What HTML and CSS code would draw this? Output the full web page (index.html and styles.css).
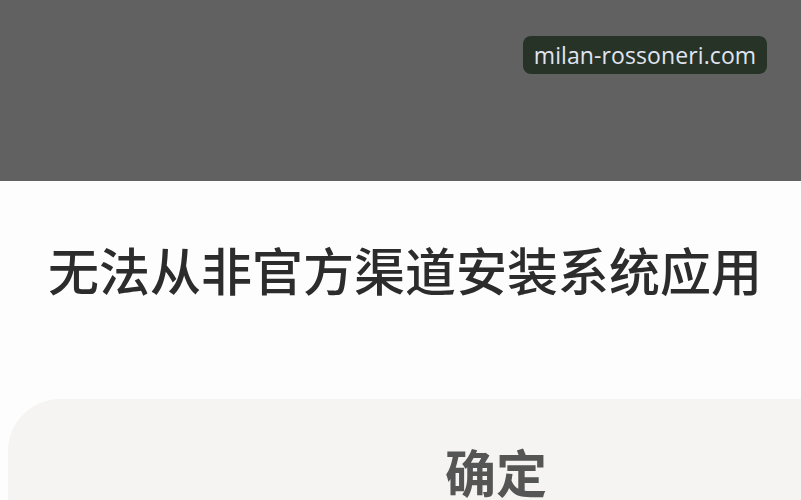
FILE: index.html
```html
<!DOCTYPE html>
<html lang="zh-CN">
<head>
<meta charset="utf-8">
<link rel="stylesheet" href="styles.css">
</head>
<body>
<div class="screen">
  <div class="shade">
    <div class="watermark">milan-rossoneri.com</div>
  </div>
  <div class="dialog">
    <div class="title">无法从非官方渠道安装系统应用</div>
    <div class="button"><span class="label">确定</span></div>
  </div>
</div>
</body>
</html>
```
FILE: styles.css
```css
html, body {
  margin: 0;
  padding: 0;
}
body {
  width: 801px;
  height: 500px;
  overflow: hidden;
  background: #fdfdfd;
  font-family: "Noto Sans CJK SC", "Noto Sans", sans-serif;
}
.screen {
  display: flex;
  flex-direction: column;
  height: 500px;
  overflow: hidden;
}
.shade {
  position: relative;
  height: 181px;
  background: #616161;
  flex: none;
}
.watermark {
  position: absolute;
  left: 523px;
  top: 36px;
  width: 244px;
  height: 38px;
  box-sizing: border-box;
  border-radius: 8px;
  background: #263326;
  color: #e0e4f0;
  font-family: "Open Sans", "Noto Sans", sans-serif;
  font-size: 23px;
  line-height: 38px;
  text-align: center;
  letter-spacing: 0.1px;
}
.dialog {
  flex: 1;
  min-height: 0;
  background: #fdfdfd;
  display: flex;
  flex-direction: column;
}
.title {
  flex: none;
  padding-top: 63px;
  padding-left: 48px;
  font-size: 51px;
  font-weight: 500;
  line-height: 51px;
  color: #2c2c2c;
  white-space: nowrap;
}
.button {
  flex: 1;
  min-height: 0;
  overflow: hidden;
  margin-top: 104px;
  margin-left: 8px;
  border-radius: 52px 0 0 0;
  background: #f5f4f2;
  display: flex;
  justify-content: flex-start;
  padding-top: 47px;
  padding-left: 437px;
  box-sizing: border-box;
}
.label {
  color: #555555;
  font-size: 51px;
  font-weight: 700;
  line-height: 51px;
  white-space: nowrap;
}
```
